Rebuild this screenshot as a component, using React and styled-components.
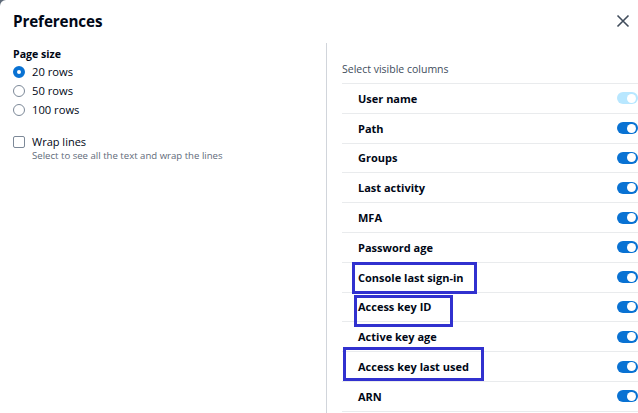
import React from 'react';
import styled, { createGlobalStyle } from 'styled-components';

const GlobalStyle = createGlobalStyle`
  html, body {
    margin: 0;
    padding: 0;
    background: #5f6b7a;
    overflow: hidden;
  }
  * {
    box-sizing: border-box;
  }
`;

const Modal = styled.div`
  width: 638px;
  height: 413px;
  background: #ffffff;
  border-top-left-radius: 6px;
  font-family: "Open Sans", "Noto Sans", sans-serif;
  color: #000716;
  display: flex;
  flex-direction: column;
  overflow: hidden;
`;

const Header = styled.div`
  height: 43px;
  display: flex;
  align-items: center;
  justify-content: space-between;
  padding: 0 4px 1px 13px;
`;

const Title = styled.h2`
  margin: 0;
  font-size: 15.2px;
  font-weight: 700;
  letter-spacing: -0.1px;
`;

const CloseButton = styled.button`
  border: none;
  background: none;
  padding: 0;
  width: 22px;
  height: 22px;
  display: flex;
  align-items: center;
  justify-content: center;
  color: #414d5c;
  cursor: pointer;
`;

const Body = styled.div`
  flex: 1;
  display: grid;
  grid-template-columns: 326px 1fr;
`;

const LeftColumn = styled.div`
  padding: 3px 13px 0;
  display: flex;
  flex-direction: column;
`;

const RightColumn = styled.div`
  border-left: 1px solid #d1d5db;
  padding: 19px 0 0 15px;
`;

const GroupLabel = styled.div`
  font-size: 10.6px;
  font-weight: 700;
  line-height: 16px;
  margin-bottom: 2px;
`;

const RadioList = styled.div`
  display: flex;
  flex-direction: column;
  gap: 3px;
`;

const RadioRow = styled.label`
  display: flex;
  align-items: center;
  gap: 7px;
  font-size: 11.2px;
  line-height: 16px;
`;

const RadioDot = styled.span`
  width: 12px;
  height: 12px;
  border-radius: 50%;
  flex-shrink: 0;
  border: ${(p) => (p.checked ? '4px solid #0972d3' : '1.5px solid #7d8998')};
  background: #ffffff;
`;

const CheckRow = styled.label`
  display: flex;
  gap: 7px;
  margin-top: 16px;
`;

const CheckBox = styled.span`
  width: 12px;
  height: 12px;
  margin-top: 2px;
  border: 1.5px solid #7d8998;
  border-radius: 2px;
  flex-shrink: 0;
`;

const CheckText = styled.div`
  display: flex;
  flex-direction: column;
`;

const CheckLabel = styled.span`
  font-size: 11px;
  line-height: 16px;
`;

const CheckHint = styled.span`
  font-size: 9.6px;
  line-height: 12px;
  color: #5f6b7a;
`;

const SectionLabel = styled.div`
  font-size: 10.5px;
  color: #414d5c;
  line-height: 15px;
  padding-bottom: 6px;
  border-bottom: 1px solid #e9ebed;
`;

const ColumnRow = styled.div`
  position: relative;
  height: 29.8px;
  display: flex;
  align-items: center;
  justify-content: space-between;
  padding-left: 16px;
  border-bottom: 1px solid #e9ebed;
`;

const ColumnName = styled.span`
  font-size: 11px;
  font-weight: 700;
`;

const Toggle = styled.span`
  width: 21px;
  height: 12px;
  border-radius: 6px;
  background: ${(p) => (p.disabled ? '#b8e7ff' : '#0972d3')};
  position: relative;
  flex-shrink: 0;
  &::after {
    content: '';
    position: absolute;
    top: 1.5px;
    right: 2px;
    width: 9px;
    height: 9px;
    border-radius: 50%;
    background: #ffffff;
  }
`;

const Highlight = styled.span`
  position: absolute;
  border: 3px solid #3131cf;
  pointer-events: none;
  left: ${(p) => p.box.left}px;
  top: ${(p) => p.box.top}px;
  width: ${(p) => p.box.width}px;
  height: ${(p) => p.box.height}px;
`;

const columns = [
  { name: 'User name', disabled: true },
  { name: 'Path' },
  { name: 'Groups' },
  { name: 'Last activity' },
  { name: 'MFA' },
  { name: 'Password age' },
  { name: 'Console last sign-in', box: { left: 10, top: -1, width: 125, height: 32 } },
  { name: 'Access key ID', box: { left: 12, top: 2, width: 99, height: 32 } },
  { name: 'Active key age' },
  { name: 'Access key last used', box: { left: 1, top: -5, width: 141, height: 34 } },
  { name: 'ARN' },
];

const pageSizes = ['20 rows', '50 rows', '100 rows'];

const App = () => (
  <>
    <GlobalStyle />
    <Modal>
      <Header>
        <Title>Preferences</Title>
        <CloseButton aria-label="Close">
          <svg width="14" height="14" viewBox="0 0 14 14" fill="none">
            <path d="M1.5 1.5L12.5 12.5M12.5 1.5L1.5 12.5" stroke="currentColor" strokeWidth="1.6" />
          </svg>
        </CloseButton>
      </Header>
      <Body>
        <LeftColumn>
          <GroupLabel>Page size</GroupLabel>
          <RadioList>
            {pageSizes.map((size, i) => (
              <RadioRow key={size}>
                <RadioDot checked={i === 0} />
                {size}
              </RadioRow>
            ))}
          </RadioList>
          <CheckRow>
            <CheckBox />
            <CheckText>
              <CheckLabel>Wrap lines</CheckLabel>
              <CheckHint>Select to see all the text and wrap the lines</CheckHint>
            </CheckText>
          </CheckRow>
        </LeftColumn>
        <RightColumn>
          <SectionLabel>Select visible columns</SectionLabel>
          {columns.map((col) => (
            <ColumnRow key={col.name}>
              <ColumnName>{col.name}</ColumnName>
              <Toggle disabled={col.disabled} />
              {col.box && <Highlight box={col.box} />}
            </ColumnRow>
          ))}
        </RightColumn>
      </Body>
    </Modal>
  </>
);

export default App;
